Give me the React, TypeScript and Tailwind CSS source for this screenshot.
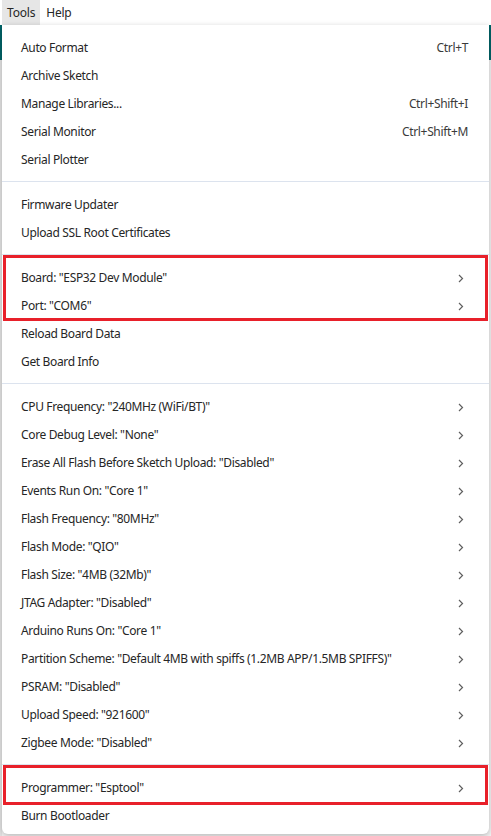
// App.tsx
// Arduino IDE "Tools" menu, dropped open over the editor

type Item = { label: string; shortcut?: string; sub?: boolean };

const GROUPS: Item[][] = [
    [
        { label: "Auto Format", shortcut: "Ctrl+T" },
        { label: "Archive Sketch" },
        { label: "Manage Libraries...", shortcut: "Ctrl+Shift+I" },
        { label: "Serial Monitor", shortcut: "Ctrl+Shift+M" },
        { label: "Serial Plotter" },
    ],
    [{ label: "Firmware Updater" }, { label: "Upload SSL Root Certificates" }],
    [
        { label: 'Board: "ESP32 Dev Module"', sub: true },
        { label: 'Port: "COM6"', sub: true },
        { label: "Reload Board Data" },
        { label: "Get Board Info" },
    ],
    [
        { label: 'CPU Frequency: "240MHz (WiFi/BT)"', sub: true },
        { label: 'Core Debug Level: "None"', sub: true },
        { label: 'Erase All Flash Before Sketch Upload: "Disabled"', sub: true },
        { label: 'Events Run On: "Core 1"', sub: true },
        { label: 'Flash Frequency: "80MHz"', sub: true },
        { label: 'Flash Mode: "QIO"', sub: true },
        { label: 'Flash Size: "4MB (32Mb)"', sub: true },
        { label: 'JTAG Adapter: "Disabled"', sub: true },
        { label: 'Arduino Runs On: "Core 1"', sub: true },
        { label: 'Partition Scheme: "Default 4MB with spiffs (1.2MB APP/1.5MB SPIFFS)"', sub: true },
        { label: 'PSRAM: "Disabled"', sub: true },
        { label: 'Upload Speed: "921600"', sub: true },
        { label: 'Zigbee Mode: "Disabled"', sub: true },
    ],
    [{ label: 'Programmer: "Esptool"', sub: true }, { label: "Burn Bootloader" }],
];

function Chevron() {
    return (
        <svg width="6" height="9" viewBox="0 0 6 9" className="mr-[4px] text-[#5f5f5f]">
            <polyline points="1,1 4.5,4.5 1,8" fill="none" stroke="currentColor" strokeWidth="1.2" />
        </svg>
    );
}

function Row({ item }: { item: Item }) {
    return (
        <div className="flex h-[28px] items-center pl-[19px] pr-[21px] text-[12px] tracking-[-0.35px] text-[#262626]">
            <span className="flex-1">{item.label}</span>
            {item.shortcut && <span className="text-[#3a3a3a]">{item.shortcut}</span>}
            {item.sub && <Chevron />}
        </div>
    );
}

export default function App() {
    return (
        <div
            className="relative h-[836px] w-[491px] overflow-hidden bg-white"
            style={{ fontFamily: '"Noto Sans", "Open Sans", sans-serif' }}
        >
            {/* menu bar */}
            <div className="flex h-[25px] items-center text-[12px] tracking-[-0.2px] text-[#262626]">
                <div className="ml-[2px] flex h-[25px] items-center bg-[#e6e6e6] px-[5px]">Tools</div>
                <div className="px-[6px]">Help</div>
            </div>

            {/* editor behind */}
            <div className="h-[35px] bg-[#006468]" />
            <div className="h-full border-l-2 border-[#e4e4e4] bg-[#f4f4f4]" />

            {/* dropdown */}
            <div className="absolute left-[2px] top-[25px] w-[487px] rounded-b-[6px] bg-white pb-[4px] pt-[9px] shadow-[0_2px_6px_rgba(0,0,0,0.25)]">
                {GROUPS.map((group, gi) => (
                    <div key={gi}>
                        {gi > 0 && (
                            <div className="pb-[9px] pt-[7px]">
                                <div className="h-px bg-[#dce3ee]" />
                            </div>
                        )}
                        {gi === 2 ? (
                            <>
                                <div className="relative">
                                    <div className="pointer-events-none absolute -top-[9px] bottom-[-1px] left-[1px] right-[1px] border-[3px] border-[#e8202a]" />
                                    <Row item={group[0]} />
                                    <Row item={group[1]} />
                                </div>
                                {group.slice(2).map((it) => (
                                    <Row key={it.label} item={it} />
                                ))}
                            </>
                        ) : gi === 4 ? (
                            <>
                                <div className="relative">
                                    <div className="pointer-events-none absolute -top-[9px] bottom-[-3px] left-[1px] right-[1px] border-[3px] border-[#e8202a]" />
                                    <Row item={group[0]} />
                                </div>
                                <Row item={group[1]} />
                            </>
                        ) : (
                            group.map((it) => <Row key={it.label} item={it} />)
                        )}
                    </div>
                ))}
            </div>
        </div>
    );
}
